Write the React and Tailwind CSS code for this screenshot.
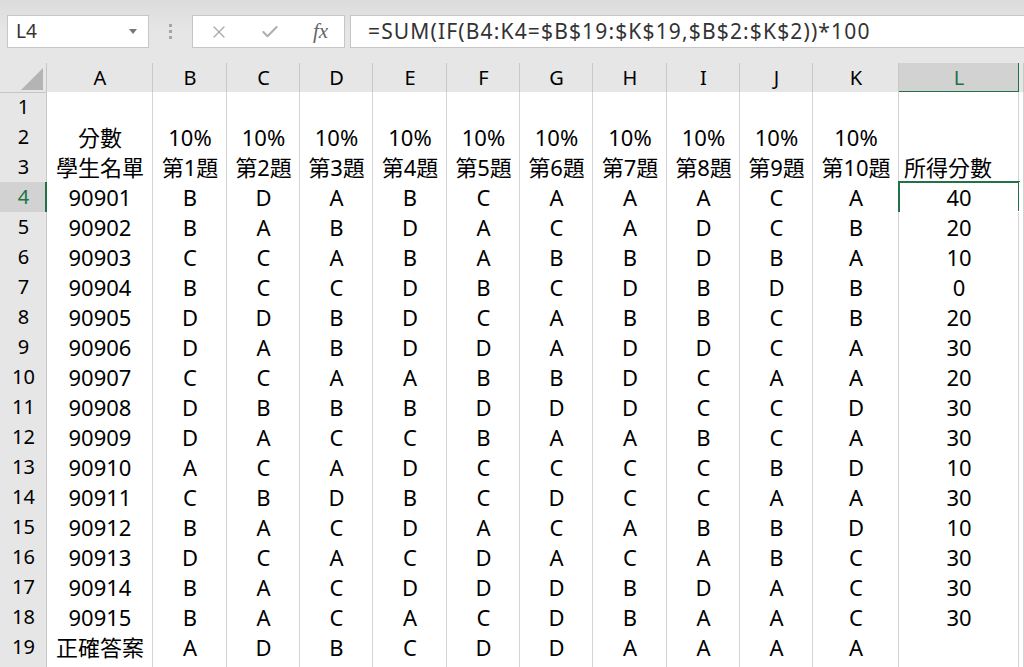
import React from 'react';
import { X, Check } from 'lucide-react';

const COLS = ['A', 'B', 'C', 'D', 'E', 'F', 'G', 'H', 'I', 'J', 'K', 'L', ''];

const students = [
  ['90901', 'BDABCAAACA', '40'],
  ['90902', 'BABDACADCB', '20'],
  ['90903', 'CCABABBDBA', '10'],
  ['90904', 'BCCDBCDBDB', '0'],
  ['90905', 'DDBDCABBCB', '20'],
  ['90906', 'DABDDADDCA', '30'],
  ['90907', 'CCAABBDCAA', '20'],
  ['90908', 'DBBBDDDCCD', '30'],
  ['90909', 'DACCBAABCA', '30'],
  ['90910', 'ACADCCCCBD', '10'],
  ['90911', 'CBDBCDCCAA', '30'],
  ['90912', 'BACDACABBD', '10'],
  ['90913', 'DCACDACABC', '30'],
  ['90914', 'BACDDDBDAC', '30'],
  ['90915', 'BACACDBAAC', '30'],
];

const rows = [
  [''],
  ['分數', ...Array(10).fill('10%'), ''],
  ['學生名單', ...Array.from({ length: 10 }, (_, i) => `第${i + 1}題`), '所得分數'],
  ...students.map(([id, ans, score]) => [id, ...ans.split(''), score]),
  ['正確答案', ...'ADBCDDAAAA'.split(''), ''],
  [''],
];

const gridCols = 'grid grid-cols-[47px_106px_74px_73px_73px_74px_73px_73px_74px_73px_73px_86px_120px_1fr]';

export default function App() {
  return (
    <div className="w-[1024px] h-[667px] overflow-hidden bg-[#e6e6e6] font-['Noto_Sans','Noto_Sans_CJK_TC',sans-serif] text-black">
      {/* Formula bar */}
      <div className="h-[63px] flex items-start pt-[15px] bg-gradient-to-b from-[#dcdcdc] via-[#e6e6e6] to-[#e6e6e6]">
        <div className="ml-[7px] w-[142px] h-[33px] bg-white border border-[#c6c6c6] flex items-center justify-between pl-[8px] pr-[11px]">
          <span className="text-[19px] text-[#333]">L4</span>
          <svg width="8" height="5" viewBox="0 0 8 5"><path d="M0 0h8L4 5z" fill="#777" /></svg>
        </div>
        <div className="w-[43px] h-[33px] flex flex-col items-center justify-center gap-[3px]">
          <span className="w-[3px] h-[3px] bg-[#a6a6a6]" />
          <span className="w-[3px] h-[3px] bg-[#a6a6a6]" />
          <span className="w-[3px] h-[3px] bg-[#a6a6a6]" />
        </div>
        <div className="w-[153px] h-[33px] bg-white border border-[#c6c6c6] flex items-center pl-[16px]">
          <X className="w-[20px] h-[20px] text-[#a8a8a8]" strokeWidth={1.5} />
          <Check className="w-[20px] h-[20px] text-[#b0b0b0] ml-[31px]" strokeWidth={2.5} />
          <span className="ml-[33px] text-[21px] italic text-[#666] font-['Liberation_Serif',serif]">fx</span>
        </div>
        <div className="ml-[5px] flex-1 h-[33px] bg-white border border-[#c6c6c6] border-r-0 flex items-center pl-[17px]">
          <span className="text-[21px] text-[#333] tracking-[1.15px] whitespace-nowrap">=SUM(IF(B4:K4=$B$19:$K$19,$B$2:$K$2))*100</span>
        </div>
      </div>

      {/* Column headers */}
      <div className={`${gridCols} h-[29px] bg-[#e6e6e6]`}>
        <div className="relative shadow-[inset_-1px_-1px_0_0_#c6c6c6]">
          <svg className="absolute right-[4px] bottom-[3px]" width="22" height="22" viewBox="0 0 22 22">
            <path d="M22 0V22H0z" fill="#b4b4b4" />
          </svg>
        </div>
        {COLS.map((c, i) =>
          c === 'L' ? (
            <div key={i} className="bg-[#d2d2d2] shadow-[inset_-1px_-2px_0_0_#217346] flex items-center justify-center text-[20px] text-[#217346]">
              {c}
            </div>
          ) : (
            <div key={i} className="shadow-[inset_-1px_-1px_0_0_#c8c8c8] flex items-center justify-center text-[20px]">
              {c}
            </div>
          )
        )}
      </div>

      {/* Rows */}
      {rows.map((r, ri) => {
        const rowNum = ri + 1;
        const active = rowNum === 4;
        return (
          <div key={ri} className={`${gridCols} h-[30px]`}>
            <div
              className={`flex items-center justify-center text-[20px] pb-[2px] ${
                active
                  ? 'bg-[#d2d2d2] text-[#217346] shadow-[inset_-2px_0_0_0_#217346,inset_0_-1px_0_0_#c8c8c8]'
                  : 'bg-[#e6e6e6] shadow-[inset_-1px_-1px_0_0_#c8c8c8]'
              }`}
            >
              {rowNum <= 19 ? rowNum : ''}
            </div>
            {COLS.map((c, ci) => {
              const v = r[ci] ?? '';
              const sel = active && c === 'L';
              const left = rowNum === 3 && c === 'L';
              return (
                <div
                  key={ci}
                  className={`relative bg-white shadow-[inset_-1px_-1px_0_0_#d4d4d4] flex items-center text-[22px] leading-none whitespace-nowrap pb-[3px] ${
                    left ? 'justify-start pl-[5px]' : 'justify-center'
                  }`}
                >
                  {v}
                  {sel && (
                    <>
                      <div className="absolute -top-[1px] -left-[1px] right-[-1px] bottom-[-1px] border-2 border-[#217346]" />
                      <div className="absolute right-[-4px] bottom-[-4px] w-[7px] h-[7px] bg-[#217346] border border-white" />
                    </>
                  )}
                </div>
              );
            })}
          </div>
        );
      })}
    </div>
  );
}
